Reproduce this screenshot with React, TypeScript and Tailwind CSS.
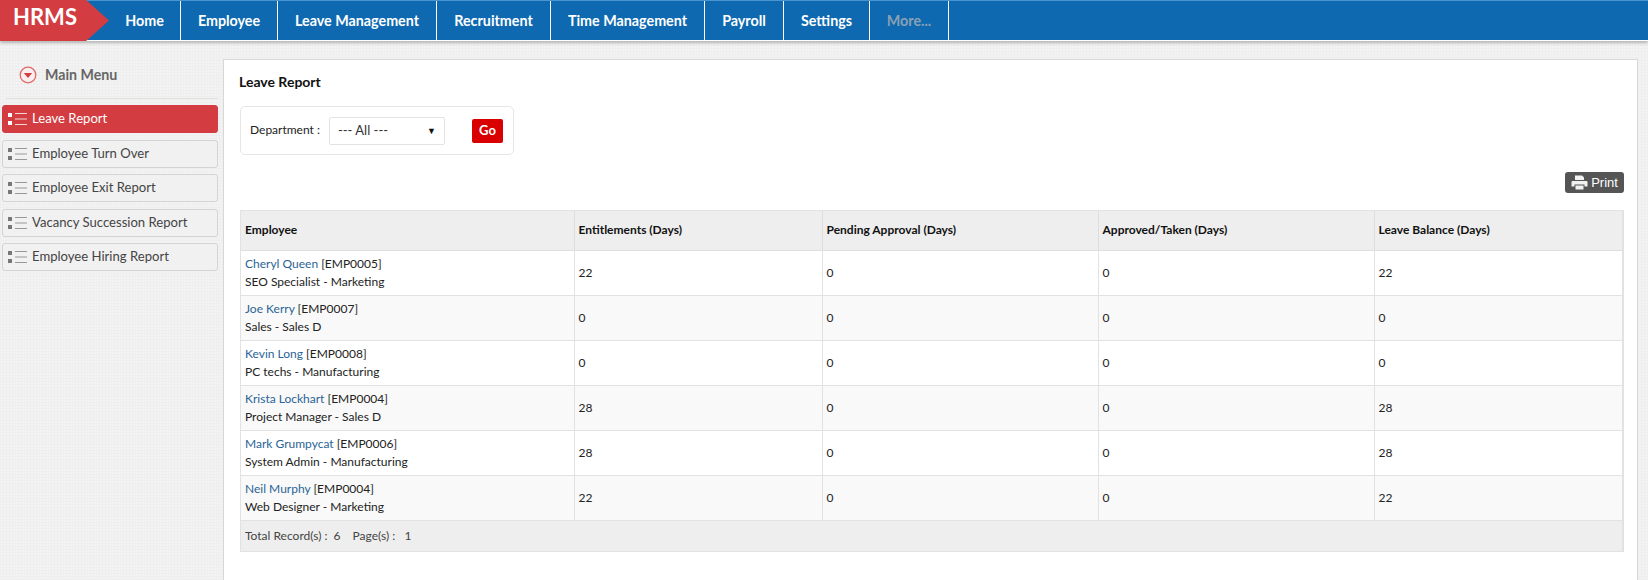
import React from "react";

const navItems: [string, number][] = [
  ["Home", 72],
  ["Employee", 97],
  ["Leave Management", 159],
  ["Recruitment", 114],
  ["Time Management", 154],
  ["Payroll", 79],
  ["Settings", 86],
  ["More...", 79],
];

const menu = ["Leave Report", "Employee Turn Over", "Employee Exit Report", "Vacancy Succession Report", "Employee Hiring Report"];

const rows = [
  ["Cheryl Queen", "[EMP0005]", "SEO Specialist - Marketing", "22", "0", "0", "22"],
  ["Joe Kerry", "[EMP0007]", "Sales - Sales D", "0", "0", "0", "0"],
  ["Kevin Long", "[EMP0008]", "PC techs - Manufacturing", "0", "0", "0", "0"],
  ["Krista Lockhart", "[EMP0004]", "Project Manager - Sales D", "28", "0", "0", "28"],
  ["Mark Grumpycat", "[EMP0006]", "System Admin - Manufacturing", "28", "0", "0", "28"],
  ["Neil Murphy", "[EMP0004]", "Web Designer - Marketing", "22", "0", "0", "22"],
];

function ListIcon({ active }: { active: boolean }) {
  const dot = active ? "#fff" : "#777";
  const line = active ? "#f6d5d5" : "#999";
  return (
    <svg width="20" height="14" viewBox="0 0 20 14" className="shrink-0">
      <rect x="0" y="1" width="4" height="4" fill={dot} />
      <rect x="0" y="9" width="4" height="4" fill={dot} />
      <rect x="7" y="1" width="12" height="1" fill={line} />
      <rect x="7" y="6.5" width="12" height="1" fill={line} />
      <rect x="7" y="12" width="12" height="1" fill={line} />
    </svg>
  );
}

export default function App() {
  return (
    <div className="w-[1648px] h-[580px] overflow-hidden flex flex-col bg-[#f3f3f3] bg-[repeating-linear-gradient(0deg,#eeeeee_0px,#eeeeee_1px,transparent_1px,transparent_3px),repeating-linear-gradient(90deg,#efefef_0px,#efefef_1px,transparent_1px,transparent_3px)] font-['Lato','Noto_Sans',sans-serif] text-[#222]">
      <header className="h-[41px] shrink-0 flex bg-[#0e69b0] border-t border-t-[#4a94cf] border-b border-b-white shadow-[0_2px_3px_rgba(0,0,0,0.25)]">
        <div className="w-[109px] -mt-px h-[41px] shrink-0 bg-[#d33c40] [clip-path:polygon(0_0,79%_0,100%_50%,79%_100%,0_100%)] pl-[13px] text-white font-bold text-[22px] leading-[34px]">
          HRMS
        </div>
        {navItems.map(([label, w]) => (
          <div
            key={label}
            style={{ width: w }}
            className={`shrink-0 h-full flex items-center justify-center border-r border-r-white text-[14.3px] font-bold ${label === "More..." ? "text-[#8aa0b4]" : "text-white"}`}
          >
            <span className="mt-[1px]">{label}</span>
          </div>
        ))}
      </header>

      <div className="flex-1 flex min-h-0">
        <aside className="w-[223px] shrink-0 pl-[2px] pt-[20px]">
          <div className="ml-[4px] mr-[5px] h-[38px] border-b border-b-[#e2e2dc] pl-[13px] flex items-start gap-[8px] pt-[4px]">
            <svg width="18" height="18" viewBox="0 0 18 18" className="mt-[1px] shrink-0">
              <circle cx="9" cy="9" r="7.8" fill="#fbeeee" stroke="#df6b6b" strokeWidth="1.3" />
              <path d="M4.8 7 L13.2 7 L9 12 Z" fill="#d33c40" />
            </svg>
            <span className="text-[14.2px] font-bold text-[#666] leading-[20px]">Main Menu</span>
          </div>
          <nav className="mt-[6px] flex flex-col gap-[6.5px] w-[216px]">
            {menu.map((m, i) => (
              <div
                key={m}
                className={`h-[28px] rounded-[3px] flex items-center pl-[5px] gap-[4px] text-[13.1px] border ${
                  i === 0
                    ? "bg-[#d33c40] border-[#d33c40] text-white"
                    : "bg-[#f1f1f1] border-[#d4d4d4] text-[#444]"
                }`}
              >
                <ListIcon active={i === 0} />
                <span>{m}</span>
              </div>
            ))}
          </nav>
        </aside>

        <main className="mt-[18px] w-[1415px] shrink-0 bg-white border-t border-l border-r border-[#d8d8d8] pl-[15px] pr-[12px] pt-[12px]">
          <h1 className="text-[14px] font-bold text-[#111] leading-[20px]">Leave Report</h1>
          <div className="mt-[14px] ml-[1px] w-[274px] h-[49px] border border-[#e6e6e6] rounded-[5px] flex items-center pl-[9px] text-[12px] text-[#222]">
            <span className="-mt-[1px]">Department :</span>
            <div className="ml-[9px] w-[116px] h-[28px] border border-[#e3e3e3] rounded-[2px] flex items-center justify-between pl-[8px] pr-[8px] text-[13px] text-[#333]">
              <span>--- All ---</span>
              <span className="text-[9px] text-[#111]">▼</span>
            </div>
            <div className="ml-[27px] w-[31px] h-[24px] bg-[#d90000] rounded-[2px] text-white font-bold text-[13px] flex items-center justify-center">
              Go
            </div>
          </div>

          <div className="mt-[17px] flex justify-end pr-[1px]">
            <div className="w-[59px] h-[21px] bg-[#555] rounded-[3px] flex items-center justify-center gap-[3px] text-white text-[13px] font-['Liberation_Sans',sans-serif]">
              <svg width="17" height="15" viewBox="0 0 17 15">
                <path d="M4 0.5 H11 L13 2.5 V5 H4 Z M1.5 6 H15.5 Q16.5 6 16.5 7 V11.5 H13.5 V9.5 H3.5 V11.5 H0.5 V7 Q0.5 6 1.5 6 Z M4.5 10.5 H12.5 V14.5 H4.5 Z" fill="#f2f2f2" />
              </svg>
              <span>Print</span>
            </div>
          </div>

          <div className="mt-[17px] ml-[1px] w-[1384px] border border-[#e2e2e2] border-r-2">
            <table className="w-full border-collapse table-fixed text-[12px]">
              <colgroup>
                <col className="w-[333px]" />
                <col className="w-[248px]" />
                <col className="w-[276px]" />
                <col className="w-[276px]" />
                <col />
              </colgroup>
              <thead>
                <tr className="h-[39px] bg-[#eeeeee] text-[#111] border-b border-b-[#dedede]">
                  {["Employee", "Entitlements (Days)", "Pending Approval (Days)", "Approved/Taken (Days)", "Leave Balance (Days)"].map((h, i) => (
                    <th key={h} className={`text-left font-bold px-[4px] ${i ? "border-l border-l-[#dedede]" : ""}`}>
                      {h}
                    </th>
                  ))}
                </tr>
              </thead>
              <tbody>
                {rows.map((r, i) => (
                  <tr key={r[0]} className={`h-[45px] border-b border-b-[#e2e2e2] ${i % 2 ? "bg-[#f9f9f9]" : "bg-white"}`}>
                    <td className="px-[4px] pt-[1px] leading-[18px]">
                      <div>
                        <span className="text-[#2a6496]">{r[0]}</span> {r[1]}
                      </div>
                      <div>{r[2]}</div>
                    </td>
                    {r.slice(3).map((v, j) => (
                      <td key={j} className="px-[4px] border-l border-l-[#e2e2e2]">
                        {v}
                      </td>
                    ))}
                  </tr>
                ))}
              </tbody>
            </table>
            <div className="h-[30px] bg-[#eeeeee] flex items-center pl-[4px] text-[12px] text-[#444]">
              <span>Total Record(s) :&nbsp; 6</span>
              <span className="ml-[12px]">Page(s) :&nbsp;&nbsp; 1</span>
            </div>
          </div>
        </main>
      </div>
    </div>
  );
}
